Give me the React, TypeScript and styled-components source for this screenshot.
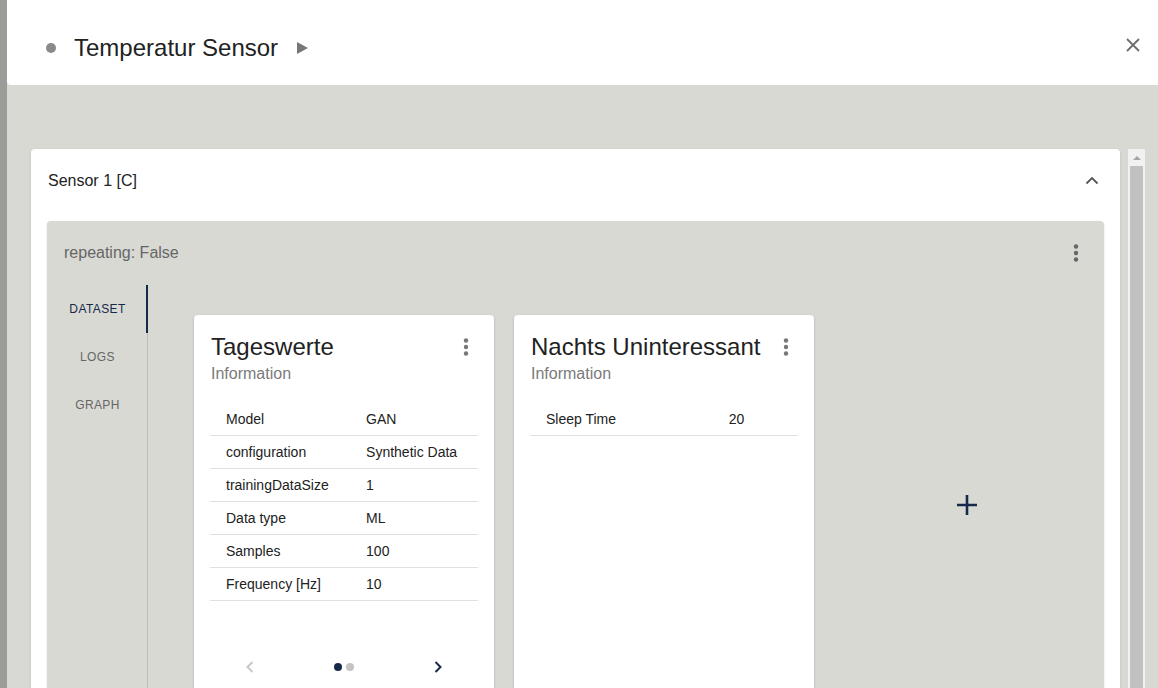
import React from 'react';
import styled, { createGlobalStyle } from 'styled-components';

const GlobalStyle = createGlobalStyle`
  html, body {
    margin: 0;
    padding: 0;
    height: 100%;
    overflow: hidden;
    background: #9b9b97;
    font-family: "Liberation Sans", Arial, sans-serif;
  }
  #root {
    height: 100%;
  }
`;

const NAVY = '#16294a';

const Backdrop = styled.div`
  display: flex;
  height: 688px;
  padding-left: 7px;
  background: #9b9b97;
`;

const Dialog = styled.div`
  flex: 1;
  display: flex;
  flex-direction: column;
  background: #d9d9d4;
  overflow: hidden;
`;

const Header = styled.header`
  height: 85px;
  flex-shrink: 0;
  display: flex;
  align-items: center;
  background: #fff;
  border-radius: 0 0 0 4px;
  padding: 11px 17px 0 39px;
  box-sizing: border-box;
`;

const Bullet = styled.span`
  width: 10px;
  height: 10px;
  border-radius: 50%;
  background: #8a8a8a;
  margin-right: 18px;
`;

const Title = styled.h1`
  margin: 0;
  font-size: 24px;
  font-weight: 400;
  color: #222;
  line-height: 32px;
`;

const PlayIcon = styled.span`
  width: 0;
  height: 0;
  margin-left: 19px;
  border-top: 6px solid transparent;
  border-bottom: 6px solid transparent;
  border-left: 11px solid #777;
`;

const CloseButton = styled.button`
  margin-left: auto;
  border: 0;
  background: none;
  padding: 0;
  width: 18px;
  height: 18px;
  display: flex;
  align-items: center;
  justify-content: center;
  margin-top: -6px;
  margin-right: -1px;
`;

const Body = styled.div`
  flex: 1;
  display: flex;
  padding: 64px 13px 0 24px;
  min-height: 0;
`;

const Content = styled.div`
  flex: 1;
  min-width: 0;
`;

const Scrollbar = styled.div`
  width: 17px;
  margin-left: 8px;
  display: flex;
  flex-direction: column;
  background: #f1f1f1;
`;

const ScrollArrow = styled.div`
  height: 17px;
  display: flex;
  align-items: center;
  justify-content: center;
  &::before {
    content: '';
    border-left: 4px solid transparent;
    border-right: 4px solid transparent;
    border-bottom: 4px solid #a3a3a3;
  }
`;

const ScrollThumb = styled.div`
  flex: 1;
  margin: 0 2px;
  background: #c1c1c1;
`;

const SensorCard = styled.section`
  background: #fff;
  border-radius: 4px;
  box-shadow: 0 1px 3px rgba(0, 0, 0, 0.12);
  padding: 0 16px 16px;
  box-sizing: border-box;
`;

const SensorHeader = styled.div`
  display: flex;
  align-items: center;
  justify-content: space-between;
  padding: 16px 0 24px 1px;
  line-height: 32px;
  font-size: 16px;
  color: #222;
`;

const IconButton = styled.span`
  display: flex;
  align-items: center;
  justify-content: center;
  width: 24px;
  height: 24px;
`;

const InnerPanel = styled.div`
  background: #d9d9d4;
  border-radius: 4px;
  box-shadow: 0 1px 2px rgba(0, 0, 0, 0.15);
  height: 600px;
  display: flex;
  flex-direction: column;
`;

const PanelHeader = styled.div`
  height: 64px;
  flex-shrink: 0;
  display: flex;
  align-items: center;
  justify-content: space-between;
  padding: 0 16px 0 17px;
  font-size: 16px;
  color: #666;
`;

const PanelBody = styled.div`
  flex: 1;
  display: flex;
`;

const TabList = styled.nav`
  width: 100px;
  flex-shrink: 0;
  border-right: 1px solid #bdbdbb;
  display: flex;
  flex-direction: column;
`;

const Tab = styled.div<{ $active?: boolean }>`
  height: 48px;
  display: flex;
  align-items: center;
  justify-content: center;
  font-size: 12px;
  letter-spacing: 0.4px;
  text-transform: uppercase;
  color: ${(p) => (p.$active ? NAVY : '#666')};
  box-shadow: ${(p) => (p.$active ? `inset -2px 0 0 ${NAVY}` : 'none')};
  margin-right: -1px;
`;

const CardRow = styled.div`
  flex: 1;
  display: flex;
  gap: 20px;
  padding: 30px 4px 0 46px;
  align-items: flex-start;
`;

const DataCard = styled.div`
  width: 300px;
  height: 400px;
  flex-shrink: 0;
  background: #fff;
  border-radius: 4px;
  box-shadow: 0 1px 3px rgba(0, 0, 0, 0.15);
  display: flex;
  flex-direction: column;
  padding: 16px 16px 36px;
  box-sizing: border-box;
`;

const CardHead = styled.div`
  display: flex;
  justify-content: space-between;
  align-items: flex-start;
`;

const CardTitle = styled.div`
  font-size: 24px;
  line-height: 32px;
  color: #222;
  padding-left: 1px;
`;

const CardSub = styled.div`
  font-size: 16px;
  line-height: 22px;
  color: #7a7a7a;
  padding-left: 1px;
  margin-bottom: 18px;
`;

const Table = styled.table`
  width: 100%;
  border-collapse: collapse;
  font-size: 14px;
  color: #222;
`;

const Cell = styled.td`
  padding: 6px 16px;
  line-height: 20px;
  border-bottom: 1px solid #e0e0e0;
  text-align: left;
  white-space: nowrap;
`;

const Stepper = styled.div`
  margin-top: auto;
  height: 24px;
  display: flex;
  align-items: center;
  justify-content: center;
  gap: 72px;
`;

const Dots = styled.div`
  display: flex;
  gap: 4px;
`;

const Dot = styled.span<{ $active?: boolean }>`
  width: 8px;
  height: 8px;
  border-radius: 50%;
  background: ${(p) => (p.$active ? NAVY : '#c4c4c4')};
`;

const AddSlot = styled.div`
  width: 266px;
  height: 380px;
  display: flex;
  align-items: center;
  justify-content: center;
`;

const Kebab = ({ color = '#777' }: { color?: string }) => (
  <svg width="24" height="24" viewBox="0 0 24 24">
    <circle cx="12" cy="5.5" r="2.2" fill={color} />
    <circle cx="12" cy="12" r="2.2" fill={color} />
    <circle cx="12" cy="18.5" r="2.2" fill={color} />
  </svg>
);

const Chevron = ({ dir, color }: { dir: 'left' | 'right'; color: string }) => (
  <svg width="24" height="24" viewBox="0 0 24 24">
    <path
      d={dir === 'left' ? 'M14.5 7 L9.5 12 L14.5 17' : 'M9.5 7 L14.5 12 L9.5 17'}
      fill="none"
      stroke={color}
      strokeWidth="2"
    />
  </svg>
);

interface CardData {
  title: string;
  rows: [string, string][];
  stepper?: boolean;
}

const cards: CardData[] = [
  {
    title: 'Tageswerte',
    rows: [
      ['Model', 'GAN'],
      ['configuration', 'Synthetic Data'],
      ['trainingDataSize', '1'],
      ['Data type', 'ML'],
      ['Samples', '100'],
      ['Frequency [Hz]', '10'],
    ],
    stepper: true,
  },
  {
    title: 'Nachts Uninteressant',
    rows: [['Sleep Time', '20']],
  },
];

const App: React.FC = () => {
  return (
    <>
      <GlobalStyle />
      <Backdrop>
        <Dialog>
          <Header>
            <Bullet />
            <Title>Temperatur Sensor</Title>
            <PlayIcon />
            <CloseButton aria-label="close">
              <svg width="16" height="16" viewBox="0 0 16 16">
                <path d="M2 2 L14 14 M14 2 L2 14" stroke="#6e6e6e" strokeWidth="1.8" />
              </svg>
            </CloseButton>
          </Header>
          <Body>
            <Content>
              <SensorCard>
                <SensorHeader>
                  <span>Sensor 1 [C]</span>
                  <IconButton>
                    <svg width="24" height="24" viewBox="0 0 24 24">
                      <path d="M6.5 14.5 L12 9 L17.5 14.5" fill="none" stroke="#555" strokeWidth="1.8" />
                    </svg>
                  </IconButton>
                </SensorHeader>
                <InnerPanel>
                  <PanelHeader>
                    <span>repeating: False</span>
                    <IconButton>
                      <Kebab color="#666" />
                    </IconButton>
                  </PanelHeader>
                  <PanelBody>
                    <TabList>
                      <Tab $active>Dataset</Tab>
                      <Tab>Logs</Tab>
                      <Tab>Graph</Tab>
                    </TabList>
                    <CardRow>
                      {cards.map((c) => (
                        <DataCard key={c.title}>
                          <CardHead>
                            <CardTitle>{c.title}</CardTitle>
                            <IconButton style={{ marginTop: 4 }}>
                              <Kebab />
                            </IconButton>
                          </CardHead>
                          <CardSub>Information</CardSub>
                          <Table>
                            <tbody>
                              {c.rows.map(([k, v]) => (
                                <tr key={k}>
                                  <Cell>{k}</Cell>
                                  <Cell>{v}</Cell>
                                </tr>
                              ))}
                            </tbody>
                          </Table>
                          {c.stepper && (
                            <Stepper>
                              <Chevron dir="left" color="#c8c8c8" />
                              <Dots>
                                <Dot $active />
                                <Dot />
                              </Dots>
                              <Chevron dir="right" color={NAVY} />
                            </Stepper>
                          )}
                        </DataCard>
                      ))}
                      <AddSlot>
                        <svg width="22" height="22" viewBox="0 0 22 22">
                          <path d="M11 1 V21 M1 11 H21" stroke={NAVY} strokeWidth="2.6" />
                        </svg>
                      </AddSlot>
                    </CardRow>
                  </PanelBody>
                </InnerPanel>
              </SensorCard>
            </Content>
            <Scrollbar>
              <ScrollArrow />
              <ScrollThumb />
            </Scrollbar>
          </Body>
        </Dialog>
      </Backdrop>
    </>
  );
};

export default App;
